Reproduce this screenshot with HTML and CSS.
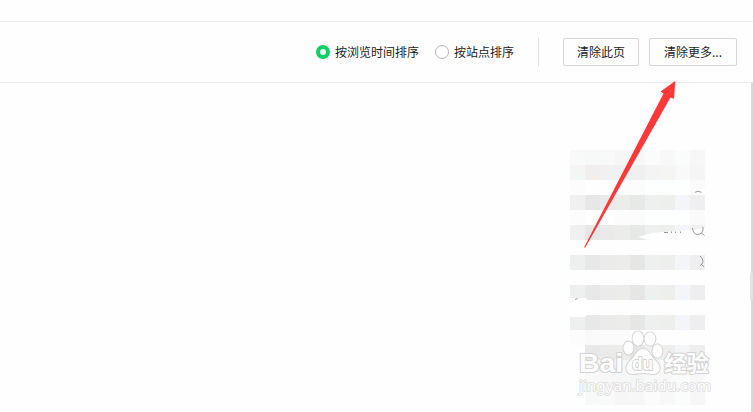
FILE: index.html
```html
<!DOCTYPE html>
<html lang="zh-CN">
<head>
  <meta charset="UTF-8" />
  <title>历史记录</title>
  <link rel="stylesheet" href="styles.css">
</head>
<body>
  <div class="topbar"></div>

  <header class="toolbar">
    <div class="sort-group">
      <div class="radio checked"><i></i><span>按浏览时间排序</span></div>
      <div class="radio"><i></i><span>按站点排序</span></div>
    </div>
    <div class="button-group">
      <button>清除此页</button>
      <button>清除更多...</button>
    </div>
  </header>

  <main class="content">
    <div class="mosaic">
      <div class="row top"></div>
      <div class="row soft"></div>
      <div class="row faint"></div>
      <div class="row strong"></div>
      <div class="row faint"></div>
      <div class="row strong"></div>
      <div class="row"></div>
      <div class="row cool"></div>
      <div class="row"></div>
      <div class="row cool"></div>
      <div class="row"></div>
      <div class="row cool"></div>
      <div class="row pale"></div>
      <div class="row cool inset"></div>
      <div class="row low inset"></div>
      <div class="row low inset"></div>
      <div class="row top inset"></div>
    </div>
    <div class="scrollbar"><div class="thumb"></div></div>
  </main>

  <svg class="marks" width="753" height="412" viewBox="0 0 753 412">
    <!-- erased patches -->
    <g fill="#fff">
      <path d="M638 237 L652 233 L670 231.5 L694 230 L705 227 V235 H680 V240 H650 L644 238.5 Z" />
      <path d="M660 233 H705 V240 H650 Z" />
      <path d="M570 298 H587 V315 L585 317 H570 Z" />
      <path d="M695 192 L705 189 V195 H695 Z" />
      <path d="M705 376 L700 388 L705 388 Z" />
    </g>
    <g fill="none" stroke="#999" stroke-width="1">
      <path d="M692.5 228 Q693 234.500 698 234.500 Q702.500 234 703 230 V227 M701.500 233 L704.500 235.500" />
      <path d="M700 256 Q703 258 703 261.500 Q702.500 264.500 700 265.500 M701 264 L704 266.800" />
      <path d="M695 192.300 L698 191.300 L701.500 192.300" />
      <path d="M575 299.500 L577.500 298.500" />
      <path d="M664 232.500 H668" />
      <path d="M671.500 231.500 V233 M675.500 231.500 V233 M680.500 231.500 V233" />
      <path d="M702.500 355 V357 M701 361.500 H704" />
    </g>
    <!-- watermark -->
    <g class="watermark">
      <text class="brand" x="579" y="372" textLength="44" lengthAdjust="spacingAndGlyphs">Bai</text>
      <g class="paw">
        <ellipse cx="628.500" cy="348" rx="5" ry="6.500" />
        <ellipse cx="638" cy="338.500" rx="5.500" ry="7.200" />
        <ellipse cx="650" cy="339" rx="5.500" ry="6.700" />
        <ellipse cx="657.500" cy="351" rx="5" ry="6.700" />
        <path d="M643 349 C649 349 650 355 655 360 C662 366 661 374 653 374 C648 374 647 373 643 373 C639 373 637 374 633 374 C625 374 624 366 631 360 C636 355 637 349 643 349 Z" />
      </g>
      <text class="paw-text" x="632" y="370" textLength="21" lengthAdjust="spacingAndGlyphs">du</text>
      <text class="brand-cn" x="664" y="371" textLength="45" lengthAdjust="spacingAndGlyphs">经验</text>
      <text class="site" x="579" y="390.500" textLength="132" lengthAdjust="spacingAndGlyphs">jingyan.baidu.com</text>
    </g>
    <!-- arrow -->
    <path fill="#fd3838" d="M584 247.500 L663.500 93.500 L660.500 91.500 L675.300 81 L674 98.800 L670.500 97.500 L585.300 247.500 Z" />
  </svg>
</body>
</html>
```

FILE: styles.css
```css
* {
  box-sizing: border-box;
}

body {
  margin: 0;
  height: 412px;
  display: flex;
  flex-direction: column;
  overflow: hidden;
  background: #fefefe;
  color: #222;
  font-family: 'Noto Sans CJK SC', sans-serif;
  font-size: 12px;
}

.topbar {
  height: 22px;
  border-bottom: 1px solid #ececec;
}

.toolbar {
  height: 61px;
  display: flex;
  justify-content: flex-end;
  align-items: center;
  padding-right: 16px;
  border-bottom: 1px solid #e9e9e9;
}

.sort-group {
  height: 28px;
  display: flex;
  align-items: center;
  gap: 16px;
  padding-right: 24px;
  border-right: 1px solid #e0e0e0;
}

.radio {
  display: flex;
  align-items: center;
  gap: 5px;
  line-height: 18px;
  white-space: nowrap;
}

.radio i {
  width: 14px;
  height: 14px;
  border: 1px solid #b5b5b5;
  border-radius: 50%;
}

.radio.checked i {
  border: 4px solid #10cf69;
  background: #eafff3;
}

.button-group {
  display: flex;
  gap: 10px;
  margin-left: 24px;
}

button {
  width: 76px;
  height: 28px;
  padding: 0 0 2px;
  border: 1px solid #d6d6d6;
  border-radius: 2px;
  background: #fefefe;
  color: #222;
  font: inherit;
}

button:last-child {
  width: 88px;
}

.content {
  flex: 1;
  display: flex;
  justify-content: flex-end;
  gap: 45px;
}

.mosaic {
  width: 135px;
  padding-top: 67px;
}

.row {
  height: 15px;
}

/* nine 15px blocks per row */
.row.top {
  background: linear-gradient(90deg, #f9f9f9 15px, #f7f9f8 0 30px, #f9f9f9 0 45px, #f6f6f6 0 60px, #f7f7f7 0 75px, #fbfbfb 0 90px, #f8f8f8 0 105px, #fafcfb 0 120px, #f7f7f7 0);
}

.row.soft {
  background: linear-gradient(90deg, #f4f6f5 15px, #f0efee 0 30px, #f1f1f1 0 45px, #f2f2f1 0 60px, #f0f0f0 0 75px, #f4f4f4 0 90px, #f5f5f3 0 105px, #f9f9f9 0 120px, #f5f5f5 0);
}

.row.faint {
  background: linear-gradient(90deg, #fcfcfc 15px, #fefefe 0 45px, #fcfcfc 0 75px, #fdfefe 0 120px, #fafafa 0);
}

.row.strong {
  background: linear-gradient(90deg, #f0f0f0 15px, #e7e7e7 0 30px, #eaeaea 0 45px, #ececea 0 60px, #e7e9e8 0 75px, #eeefef 0 90px, #eeeeec 0 105px, #f4f5f8 0 120px, #efefef 0);
}

.row.cool {
  background: linear-gradient(90deg, #eef0ef 15px, #e8e8e8 0 30px, #ebebeb 0 45px, #ececea 0 60px, #e6e6e6 0 75px, #eef0ef 0 90px, #eeeeec 0 105px, #f4f5f8 0 120px, #eeeeee 0);
}

.row.pale {
  background: linear-gradient(90deg, #fcfcfc 15px, #f9faf9 0 30px, #fbfbfb 0 60px, #fefefe 0);
}

.row.low {
  background: linear-gradient(90deg, #f8f8f8 30px, #f6f7f6 0 60px, #f4f5f5 0 75px, #f8f8f8 0 105px, #f9fafa 0 120px, #f7f7f7 0);
}

/* first block left out */
.row.inset {
  clip-path: inset(0 0 0 15px);
}

.scrollbar {
  width: 3px;
  padding-top: 190px;
  background: linear-gradient(90deg, transparent 1px, #d9d9d9 0);
}

.thumb {
  height: 27px;
  background: #e3e3e3;
}

.marks {
  position: absolute;
  top: 0;
  left: 0;
  pointer-events: none;
}

.watermark {
  fill: #fdfdfd;
  stroke: #d2d2d2;
  stroke-width: 2px;
  stroke-linejoin: round;
  paint-order: stroke;
  font-family: 'Liberation Sans', 'Noto Sans CJK SC', sans-serif;
}

.paw {
  stroke-width: 1.8px;
}

.brand {
  font-size: 26px;
  font-weight: 700;
}

.paw-text {
  font-size: 19px;
  font-weight: 700;
}

.brand-cn {
  font-family: 'Noto Sans CJK SC', sans-serif;
  font-size: 22px;
  font-weight: 700;
}

.site {
  stroke: #dcdcdc;
  stroke-width: 1.6px;
  font-family: 'Noto Sans', sans-serif;
  font-size: 15px;
}
```
